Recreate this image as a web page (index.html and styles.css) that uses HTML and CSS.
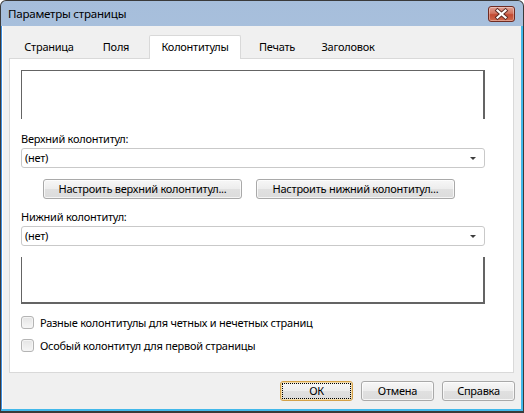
FILE: index.html
```html
<!DOCTYPE html>
<html lang="ru">
<head>
<meta charset="utf-8">
<title>Параметры страницы</title>
<link rel="stylesheet" href="styles.css">
</head>
<body>
<div class="window">
  <div class="titlebar">
    <span class="title">Параметры страницы</span>
    <div class="close">
      <svg width="27" height="16" viewBox="0 0 27 16">
        <path d="M9.5 4.5 L17.5 11.5 M17.5 4.5 L9.5 11.5" stroke="#5a2a24" stroke-width="4" stroke-linecap="square" fill="none"/>
        <path d="M9.5 4.5 L17.5 11.5 M17.5 4.5 L9.5 11.5" stroke="#ffffff" stroke-width="2.2" stroke-linecap="square" fill="none"/>
      </svg>
    </div>
  </div>
  <div class="client">
    <div class="tabs">
      <div class="tab tab-1">Страница</div>
      <div class="tab tab-2">Поля</div>
      <div class="tab tab-sel">Колонтитулы</div>
      <div class="tab tab-4">Печать</div>
      <div class="tab tab-5">Заголовок</div>
    </div>
    <div class="panel">
      <div class="preview preview-top"></div>
      <div class="label label-top">Верхний колонтитул:</div>
      <div class="select"><span>(нет)</span><span class="arrow"></span></div>
      <div class="btnrow">
        <div class="btn btn-wide">Настроить верхний колонтитул...</div>
        <div class="btn btn-wide">Настроить нижний колонтитул...</div>
      </div>
      <div class="label label-bottom">Нижний колонтитул:</div>
      <div class="select"><span>(нет)</span><span class="arrow"></span></div>
      <div class="preview preview-bottom"></div>
      <div class="check check-1"><span class="box"></span><span>Разные колонтитулы для четных и нечетных страниц</span></div>
      <div class="check check-2"><span class="box"></span><span>Особый колонтитул для первой страницы</span></div>
    </div>
    <div class="footer">
      <div class="btn btn-small btn-default"><span class="focus">ОК</span></div>
      <div class="btn btn-small">Отмена</div>
      <div class="btn btn-small">Справка</div>
    </div>
  </div>
</div>
</body>
</html>
```
FILE: styles.css
```css
* { box-sizing: border-box; }
html, body { margin: 0; padding: 0; background: #ffffff; }
body {
  font-family: "Noto Sans", "Liberation Sans", sans-serif;
  font-size: 11px;
  letter-spacing: -0.25px;
  color: #000;
}
.window {
  width: 524px;
  height: 413px;
  border: 1px solid #3a3a3a;
  border-bottom-width: 2px;
  border-radius: 6px 6px 0 0;
  background: linear-gradient(to bottom, #a6bedb 0%, #b8cde6 60%, #bfd3ea 100%);
  display: flex;
  flex-direction: column;
  overflow: hidden;
}
.titlebar {
  height: 25px;
  flex: none;
  display: flex;
  align-items: center;
  justify-content: space-between;
  padding: 0 8px 0 7px;
}
.title {
  font-size: 11.6px;
  color: #000;
  line-height: 16px;
  padding-top: 1px;
}
.close {
  width: 27px;
  height: 16px;
  margin-top: 1px;
  border: 1px solid #6f2b22;
  border-radius: 3px;
  background: linear-gradient(to bottom, #e0a093 0%, #d2735f 45%, #c24a33 55%, #cf6a4f 100%);
  box-shadow: inset 0 0 0 1px rgba(255,255,255,0.35);
  display: flex;
  align-items: center;
  justify-content: center;
}
.close svg { display: block; margin: -1px; }
.client {
  flex: 1;
  background: #f0f0f0;
  border-left: 1px solid #3d8ee0;
  border-right: 2px solid #41b8ea;
  border-bottom: 2px solid #41b8ea;
  box-shadow: inset 1px 0 0 #ffffff;
  display: flex;
  flex-direction: column;
}
.tabs {
  height: 32px;
  padding: 9px 0 0 11px;
  display: flex;
  align-items: flex-end;
  flex: none;
}
.tab {
  height: 21px;
  line-height: 19px;
  text-align: center;
  color: #000;
}
.tab-1 { width: 72px; }
.tab-2 { width: 62px; }
.tab-sel {
  width: 92px;
  height: 24px;
  margin-left: 2px;
  margin-bottom: -1px;
  line-height: 22px;
  background: #ffffff;
  border: 1px solid #d9d9d9;
  border-bottom: none;
  border-radius: 2px 2px 0 0;
  position: relative;
  z-index: 1;
}
.tab-4 { width: 72px; }
.tab-5 { width: 70px; }
.panel {
  height: 315px;
  margin: 0 7px;
  background: #ffffff;
  border: 1px solid #d9d9d9;
  padding: 0 28px 0 11px;
  display: flex;
  flex-direction: column;
  flex: none;
}
.preview {
  border-color: #646464;
  border-style: solid;
}
.preview-top {
  margin-top: 11px;
  height: 49px;
  border-width: 1px 2px 0 1px;
}
.preview-bottom {
  margin-top: 11px;
  height: 47px;
  border-width: 0 2px 2px 1px;
}
.label {
  height: 15px;
  line-height: 15px;
  color: #000;
}
.label-top { margin-top: 12px; }
.label-bottom { margin-top: 10px; }
.select {
  margin-top: 2px;
  height: 20px;
  border: 1px solid #c9c9c9;
  border-radius: 3px;
  background: #ffffff;
  display: flex;
  align-items: center;
  justify-content: space-between;
  padding: 0 8px 0 3px;
  line-height: 18px;
}
.arrow {
  width: 0;
  height: 0;
  border-left: 3px solid transparent;
  border-right: 3px solid transparent;
  border-top: 3px solid #3c3c3c;
  margin-top: 1px;
}
.btnrow {
  margin-top: 11px;
  padding-left: 22px;
  display: flex;
  gap: 14px;
}
.btn {
  height: 20px;
  border: 1px solid #a9a9a9;
  border-radius: 3px;
  background: linear-gradient(to bottom, #f7f7f7 0%, #ededed 48%, #e0e0e0 52%, #dcdcdc 100%);
  box-shadow: inset 0 0 0 1px rgba(255,255,255,0.7);
  display: flex;
  align-items: center;
  justify-content: center;
  line-height: 18px;
  color: #000;
}
.btn-wide { width: 199px; }
.check {
  display: flex;
  align-items: center;
  gap: 6px;
  height: 13px;
  line-height: 13px;
}
.check-1 { margin-top: 12px; }
.check-2 { margin-top: 10px; }
.box {
  width: 13px;
  height: 13px;
  flex: none;
  border: 1px solid #b4b4b4;
  border-radius: 3px;
  background: linear-gradient(to bottom, #e4e4e4 0%, #f6f6f6 100%);
  box-shadow: inset 0 0 0 1px #f4f4f4;
}
.footer {
  flex: none;
  display: flex;
  justify-content: flex-end;
  gap: 8px;
  padding: 8px 6px 8px 0;
}
.btn-small { width: 73px; }
.btn-default {
  border-color: #d4a24a;
  box-shadow: inset 0 0 0 1px #f3dcaa;
}
.focus {
  display: flex;
  align-items: center;
  justify-content: center;
  width: 67px;
  height: 14px;
  outline: 1px dotted #000;
  line-height: 14px;
}
```
